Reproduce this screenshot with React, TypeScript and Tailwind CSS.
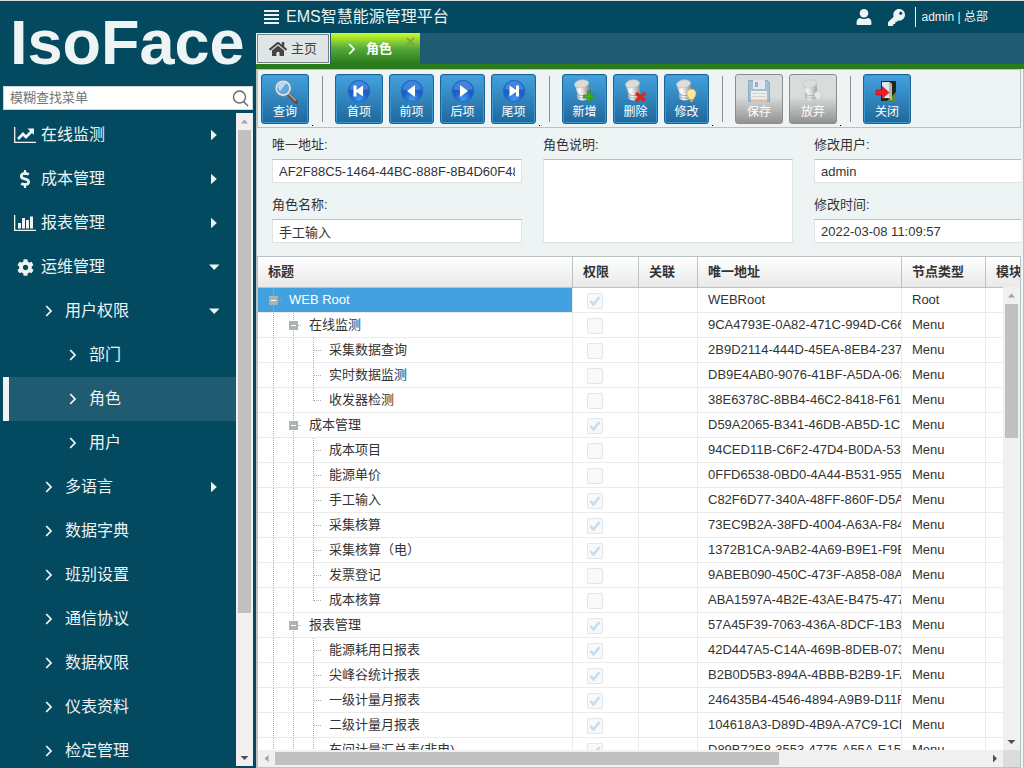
import type { ReactNode } from 'react';
import clsx from 'clsx';
import { FaCog, FaDollarSign, FaHome, FaKey } from 'react-icons/fa';

/* ---------- icons ---------- */

function LineChartIcon() {
  return (
    <svg width="22" height="16" viewBox="0 0 22 16" fill="none" stroke="currentColor">
      <path d="M.7 0v15.300H22" strokeWidth="1.300" />
      <path d="M4 12l5-5 3 3 6-6" strokeWidth="2.800" />
      <path d="M13.500 1.500H20V8z" fill="currentColor" stroke="none" />
    </svg>
  );
}

function BarChartIcon() {
  return (
    <svg width="22" height="16" viewBox="0 0 22 16" fill="currentColor">
      <path d="M0 0h1.300v14.700H22V16H0z" />
      <path d="M4 8h3v5.500H4zM8 3h3v10.500H8zM12 5h3v8.500h-3zM16 1.500h3v12h-3z" />
    </svg>
  );
}

function ChevronIcon() {
  return (
    <svg width="8" height="12" viewBox="0 0 8 12" fill="none" stroke="currentColor" strokeWidth="1.800">
      <path d="M1.200 1L6 6l-4.800 5" />
    </svg>
  );
}

function CaretIcon({ open }: { open: boolean }) {
  return (
    <svg width="12" height="12" viewBox="0 0 12 12" fill="currentColor">
      {open ? <path d="M1 3.500h10.500L6.200 9z" /> : <path d="M3 .8v10.400L8.800 6z" />}
    </svg>
  );
}

function MagnifierIcon() {
  return (
    <svg width="28" height="28" viewBox="0 0 30 30">
      <path d="M19 19l8 8" stroke="#5d5048" strokeWidth="4" strokeLinecap="round" />
      <path d="M19 18l7 7" stroke="#b7a99c" strokeWidth="1.500" strokeLinecap="round" />
      <circle cx="13" cy="12" r="7.500" fill="#5fa9de" stroke="#e1e7ec" strokeWidth="2" />
      <circle cx="13" cy="12" r="8.800" fill="none" stroke="#7d8790" strokeWidth="0.800" />
      <path d="M7.500 11a6 6 0 0 1 9-4.500l-7 9z" fill="#b9dcf4" />
    </svg>
  );
}

function RoundIcon({ d, id }: { d: string; id: string }) {
  return (
    <svg width="24" height="24" viewBox="0 0 24 24">
      <radialGradient id={id} cx="50%" cy="85%" r="85%">
        <stop offset="0" stopColor="#3f9bf5" />
        <stop offset="0.5" stopColor="#1a5cc4" />
        <stop offset="1" stopColor="#2a6fd0" />
      </radialGradient>
      <circle cx="12" cy="12" r="10.800" fill={`url(#${id})`} stroke="#2467c4" strokeWidth="0.800" />
      <path d="M2.500 10a9.700 9.700 0 0 1 19 0Q12 13 2.500 10z" fill="#5b9ee8" opacity="0.55" />
      <path d={d} fill="#fff" />
    </svg>
  );
}

function DatabaseIcon({ id, children }: { id: string; children?: ReactNode }) {
  return (
    <svg width="24" height="24" viewBox="0 0 24 24">
      <linearGradient id={id}>
        <stop offset="0" stopColor="#b5b5b5" />
        <stop offset="0.35" stopColor="#ffffff" />
        <stop offset="0.7" stopColor="#c4c4c4" />
        <stop offset="1" stopColor="#8d8d8d" />
      </linearGradient>
      <path d="M4 11v7c0 4.500 12 4.500 12 0v-7z" fill={`url(#${id})`} />
      <path d="M4 14c0 3.500 12 3.500 12 0M4 16.500c0 3.500 12 3.500 12 0" fill="none" stroke="#8a8a8a" strokeWidth="0.700" />
      <path d="M1.500 6l2.500 7c3 3 9 2 12-1l-.5-8z" fill={`url(#${id})`} />
      <ellipse cx="8.500" cy="4.800" rx="7.200" ry="4" fill="#dcdcdc" stroke="#b4b4b4" strokeWidth="0.500" transform="rotate(-10 8.500 4.800)" />
      {children}
    </svg>
  );
}

function FloppyIcon() {
  return (
    <svg width="24" height="24" viewBox="0 0 24 24">
      <path d="M1.500 1.500h19l2 2v19h-21z" fill="#8db3cf" stroke="#7296b1" />
      <path d="M6 1h12v9H6z" fill="#e8edf0" />
      <path d="M8 3h3v5H8z" fill="#819bb0" />
      <path d="M4 12h16v10H4z" fill="#f5f5f3" />
      <path d="M5 14.500h14M5 17.500h14" stroke="#cfcfcf" />
      <path d="M4 20.500h16V23H4z" fill="#e6b893" />
    </svg>
  );
}

function ExitIcon() {
  return (
    <svg width="24" height="24" viewBox="0 0 24 24">
      <path d="M6 2h15v20H6z" fill="#1d2a16" />
      <path d="M12 22l9-9v9z" fill="#5f8a34" />
      <path d="M7 3h7l3 2v16l-3-2H7z" fill="#e4e6e3" />
      <path d="M14 3l3 2v16l-3-3z" fill="#b3b8b0" />
      <path d="M1 11h6.500V7.500l6.500 6-6.500 6V16H1z" fill="#ee1c25" stroke="#a80f16" strokeWidth="0.600" />
    </svg>
  );
}

/* ---------- scrollbar arrows ---------- */

const arrows = {
  up: 'M5 10.500h7l-3.500-4z',
  down: 'M4.500 7h8l-4 4z',
  left: 'M10.500 5v7l-4-3.500z',
  right: 'M7 4.500v8l4-4z',
};

function ArrowCap({ dir, muted }: { dir: keyof typeof arrows; muted?: boolean }) {
  return (
    <svg width="17" height="17" viewBox="0 0 17 17" className="shrink-0">
      <path d={arrows[dir]} fill={muted ? '#a3a3a3' : '#505050'} />
    </svg>
  );
}

/* ---------- sidebar ---------- */

type MenuItem = {
  label: string;
  level: 0 | 1 | 2;
  icon?: ReactNode;
  caret?: 'right' | 'down';
  active?: boolean;
};

const menu: MenuItem[] = [
  { label: '在线监测', level: 0, icon: <LineChartIcon />, caret: 'right' },
  { label: '成本管理', level: 0, icon: <FaDollarSign size={18} />, caret: 'right' },
  { label: '报表管理', level: 0, icon: <BarChartIcon />, caret: 'right' },
  { label: '运维管理', level: 0, icon: <FaCog size={17} />, caret: 'down' },
  { label: '用户权限', level: 1, caret: 'down' },
  { label: '部门', level: 2 },
  { label: '角色', level: 2, active: true },
  { label: '用户', level: 2 },
  { label: '多语言', level: 1, caret: 'right' },
  { label: '数据字典', level: 1 },
  { label: '班别设置', level: 1 },
  { label: '通信协议', level: 1 },
  { label: '数据权限', level: 1 },
  { label: '仪表资料', level: 1 },
  { label: '检定管理', level: 1 },
];

const indent = ['pl-[5px]', 'pl-[29px]', 'pl-[53px]'];

function Sidebar() {
  return (
    <aside className="flex w-64 shrink-0 flex-col px-[3px] pb-0.5">
      <div className="flex h-[85px] shrink-0 items-center whitespace-nowrap pb-0.5 pl-[7px] text-[63px] font-bold leading-none text-[#eef3f4]">
        IsoFace
      </div>
      <div className="flex h-6 shrink-0 items-center border border-[#cfd6d8] bg-white pr-[3px]">
        <input
          aria-label="模糊查找菜单"
          placeholder="模糊查找菜单"
          className="min-w-0 flex-1 px-1.5 text-[13px] outline-none placeholder:text-[#757575]"
        />
        <svg width="17" height="17" viewBox="0 0 17 17" fill="none" stroke="#666" strokeWidth="1.400">
          <circle cx="7.500" cy="7" r="6" />
          <path d="M11.500 11.500l4.500 4.500" />
        </svg>
      </div>
      <div className="mt-[3px] flex min-h-0 flex-1">
        <nav className="min-w-0 flex-1 overflow-hidden">
          {menu.map((item) => (
            <a
              key={item.label}
              href="#"
              className={clsx(
                'flex h-11 items-center border-l-[6px] pr-4 text-base text-[#eef3f4]',
                indent[item.level],
                item.active ? 'border-[#eef3f4] bg-[#1f5b71]' : 'border-transparent',
              )}
            >
              <span className="mr-[5px] flex w-[22px] justify-center">{item.icon ?? <ChevronIcon />}</span>
              <span className="flex-1">{item.label}</span>
              {item.caret && <CaretIcon open={item.caret === 'down'} />}
            </a>
          ))}
        </nav>
        <div className="flex w-[17px] flex-col items-center bg-[#f0f0f0]">
          <ArrowCap dir="up" muted />
          <div className="h-[74%] w-[13px] bg-[#c0c0c0]" />
          <div className="flex-1" />
          <ArrowCap dir="down" />
        </div>
      </div>
    </aside>
  );
}

/* ---------- top bar and tabs ---------- */

function TopBar() {
  return (
    <header className="flex h-8 shrink-0 items-center pl-2 pr-9 text-[#eef3f4]">
      <button aria-label="菜单" className="mr-1.5">
        <svg width="16" height="14" viewBox="0 0 16 14" fill="currentColor">
          <path d="M0 0h15v2H0zM0 4h15v2H0zM0 8h15v2H0zM0 12h15v2H0z" />
        </svg>
      </button>
      <h1 className="flex-1 text-base">EMS智慧能源管理平台</h1>
      <button aria-label="用户" className="mr-4">
        <svg width="16" height="16" viewBox="0 0 16 16" fill="currentColor">
          <circle cx="8" cy="4.300" r="4.300" />
          <path d="M1.500 16Q.5 16 .5 14.500.5 9.300 4 9q4 2 8 0 3.500.3 3.500 5.500 0 1.500-1 1.500z" />
        </svg>
      </button>
      <button aria-label="密码" className="mr-2.5">
        <FaKey size={17} />
      </button>
      <span className="border-l border-[#eef3f4] pl-1.5 text-xs leading-5">admin | 总部</span>
    </header>
  );
}

function Tabs() {
  return (
    <div className="flex h-9 shrink-0 gap-px border-b-[5px] border-[#2b7a1b] bg-[#1f5b71]">
      <button className="flex w-[74px] border border-[#eef3f4] bg-[#e0e5e5] text-[13px] text-[#444]">
        <span className="flex h-full w-full items-center justify-center gap-1 border border-[#777f82]">
          <FaHome size={18} />
          主页
        </span>
      </button>
      <div className="flex w-[89px] bg-linear-to-b from-[#cbff18] via-[#55a83a] to-[#2b7a1b] text-white">
        <button className="flex flex-1 items-center gap-2.5 pl-[17px] text-[13px] font-bold">
          <ChevronIcon />
          角色
        </button>
        <button aria-label="关闭标签" className="mr-[5px] mt-1 self-start">
          <svg width="9" height="9" viewBox="0 0 9 9" stroke="#819455" strokeWidth="1.300">
            <path d="M1 1l7 7M8 1L1 8" />
          </svg>
        </button>
      </div>
    </div>
  );
}

/* ---------- toolbar ---------- */

function ToolButton({ label, icon, wide, disabled }: { label: string; icon: ReactNode; wide?: boolean; disabled?: boolean }) {
  return (
    <button
      disabled={disabled}
      className={clsx(
        'flex h-[50px] shrink-0 flex-col items-center rounded-[3px] border text-xs text-white',
        wide ? 'w-12' : 'w-[45px]',
        disabled
          ? 'border-[#8c8c8c] bg-linear-to-b from-[#d9dcdc] from-45% to-[#929292]'
          : 'border-[#1c6496] bg-linear-to-b from-[#44a2df] to-[#1f689b] inset-ring inset-ring-[#3796d4]',
      )}
    >
      <span className={clsx('flex h-7 items-center pt-1', disabled && 'opacity-70')}>{icon}</span>
      <span className="leading-[18px]">{label}</span>
    </button>
  );
}

function Separator() {
  return (
    <div className="relative ml-[7px] mr-1.5 h-[46px] w-px shrink-0 bg-[#8b8f91]">
      <svg width="2" height="1" viewBox="0 0 2 1" className="absolute -bottom-1 -left-2.5">
        <path d="M0 0h1v1H0z" fill="#000" />
        <path d="M1 0h1v1H1z" fill="#ff0" />
      </svg>
    </div>
  );
}

function Toolbar() {
  return (
    <div className="flex h-[59px] shrink-0 items-center gap-1.5 border border-[#b9c3c3] pl-[3px]">
      <ToolButton wide label="查询" icon={<MagnifierIcon />} />
      <Separator />
      <ToolButton wide label="首项" icon={<RoundIcon id="first" d="M6.500 6.500h3v4.500l6.500-4.500v11L9.500 13v4.500h-3z" />} />
      <ToolButton label="前项" icon={<RoundIcon id="prev" d="M15 6v12l-8-6z" />} />
      <ToolButton label="后项" icon={<RoundIcon id="next" d="M9 6v12l8-6z" />} />
      <ToolButton label="尾项" icon={<RoundIcon id="last" d="M7.500 6.500L14 11V6.500h3v11h-3V13l-6.500 4.500z" />} />
      <Separator />
      <ToolButton
        label="新增"
        icon={
          <DatabaseIcon id="db-add">
            <path d="M14.500 12h3v4h4v3h-4v4h-3v-4h-4v-3h4z" fill="#3fae1f" stroke="#2a8410" strokeWidth="0.600" />
          </DatabaseIcon>
        }
      />
      <ToolButton
        label="删除"
        icon={
          <DatabaseIcon id="db-del">
            <path d="M12 14l9 8M21 14l-9 8" stroke="#e4231b" strokeWidth="3.500" />
          </DatabaseIcon>
        }
      />
      <ToolButton
        label="修改"
        icon={
          <DatabaseIcon id="db-edit">
            <path d="M16.500 10a4.500 4.500 0 0 1 4.500 4.500c0 2.500-2 4-2.500 6h-4c-.5-2-2.500-3.500-2.500-6a4.500 4.500 0 0 1 4.500-4.500z" fill="#fde79e" stroke="#e3a93a" strokeWidth="0.600" />
            <path d="M15 21h3v2h-3z" fill="#b6a27a" />
          </DatabaseIcon>
        }
      />
      <Separator />
      <ToolButton wide disabled label="保存" icon={<FloppyIcon />} />
      <ToolButton
        wide
        disabled
        label="放弃"
        icon={
          <DatabaseIcon id="db-undo">
            <path d="M17 12a4 4 0 0 1 3 6l-3 4-3-4a4 4 0 0 1 3-6z" fill="#ededed" stroke="#bbb" strokeWidth="0.600" />
          </DatabaseIcon>
        }
      />
      <Separator />
      <ToolButton wide label="关闭" icon={<ExitIcon />} />
    </div>
  );
}

/* ---------- form ---------- */

const box = 'w-full border border-[#dfe3e3] border-t-[#b9bebe] bg-white px-1.5 text-[13px] text-[#333] outline-none';

function Field({ id, label, value }: { id: string; label: string; value: string }) {
  return (
    <div className="flex flex-col gap-[5px]">
      <label htmlFor={id} className="text-[13px] leading-[18px]">
        {label}
      </label>
      <input id={id} readOnly defaultValue={value} className={clsx(box, 'h-6')} />
    </div>
  );
}

function RoleForm() {
  return (
    <form className="flex h-32 shrink-0 gap-[21px] overflow-hidden py-2 pl-[15px] text-[#333]">
      <div className="flex w-[250px] shrink-0 flex-col gap-[13px]">
        <Field id="role-id" label="唯一地址:" value="AF2F88C5-1464-44BC-888F-8B4D60F48A21" />
        <Field id="role-name" label="角色名称:" value="手工输入" />
      </div>
      <div className="flex w-[250px] shrink-0 flex-col gap-[5px]">
        <label htmlFor="role-note" className="text-[13px] leading-[18px]">
          角色说明:
        </label>
        <textarea id="role-note" className={clsx(box, 'h-[84px] resize-none')} />
      </div>
      <div className="flex w-[250px] shrink-0 flex-col gap-[13px]">
        <Field id="mod-user" label="修改用户:" value="admin" />
        <Field id="mod-time" label="修改时间:" value="2022-03-08 11:09:57" />
      </div>
    </form>
  );
}

/* ---------- tree grid ---------- */

type Row = { title: string; level: 0 | 1 | 2; checked: boolean; id: string; type: string; last?: boolean };

const rows: Row[] = [
  { title: 'WEB Root', level: 0, checked: true, id: 'WEBRoot', type: 'Root' },
  { title: '在线监测', level: 1, checked: false, id: '9CA4793E-0A82-471C-994D-C66B', type: 'Menu' },
  { title: '采集数据查询', level: 2, checked: false, id: '2B9D2114-444D-45EA-8EB4-237', type: 'Menu' },
  { title: '实时数据监测', level: 2, checked: false, id: 'DB9E4AB0-9076-41BF-A5DA-063', type: 'Menu' },
  { title: '收发器检测', level: 2, checked: false, id: '38E6378C-8BB4-46C2-8418-F61', type: 'Menu', last: true },
  { title: '成本管理', level: 1, checked: true, id: 'D59A2065-B341-46DB-AB5D-1C', type: 'Menu' },
  { title: '成本项目', level: 2, checked: false, id: '94CED11B-C6F2-47D4-B0DA-53', type: 'Menu' },
  { title: '能源单价', level: 2, checked: false, id: '0FFD6538-0BD0-4A44-B531-955', type: 'Menu' },
  { title: '手工输入', level: 2, checked: true, id: 'C82F6D77-340A-48FF-860F-D5A', type: 'Menu' },
  { title: '采集核算', level: 2, checked: true, id: '73EC9B2A-38FD-4004-A63A-F84', type: 'Menu' },
  { title: '采集核算（电）', level: 2, checked: true, id: '1372B1CA-9AB2-4A69-B9E1-F9E', type: 'Menu' },
  { title: '发票登记', level: 2, checked: false, id: '9ABEB090-450C-473F-A858-08A', type: 'Menu' },
  { title: '成本核算', level: 2, checked: false, id: 'ABA1597A-4B2E-43AE-B475-477', type: 'Menu', last: true },
  { title: '报表管理', level: 1, checked: true, id: '57A45F39-7063-436A-8DCF-1B3', type: 'Menu' },
  { title: '能源耗用日报表', level: 2, checked: true, id: '42D447A5-C14A-469B-8DEB-073', type: 'Menu' },
  { title: '尖峰谷统计报表', level: 2, checked: true, id: 'B2B0D5B3-894A-4BBB-B2B9-1FA', type: 'Menu' },
  { title: '一级计量月报表', level: 2, checked: true, id: '246435B4-4546-4894-A9B9-D11F', type: 'Menu' },
  { title: '二级计量月报表', level: 2, checked: true, id: '104618A3-D89D-4B9A-A7C9-1CE', type: 'Menu' },
  { title: '车间计量汇总表(非电)', level: 2, checked: true, id: 'D89B72E8-3553-4775-A55A-E15', type: 'Menu' },
];

function Guide({ node, leaf, last }: { node?: boolean; leaf?: boolean; last?: boolean }) {
  return (
    <svg width="20" height="24" viewBox="0 0 20 24" className="shrink-0" fill="none" stroke="#a9b0b0">
      <path d={last ? 'M9.500 0v13' : 'M9.500 0v24'} strokeDasharray="1 1" />
      {(node || leaf) && <path d="M10 12.500h8" strokeDasharray="1 1" />}
      {node && (
        <>
          <path d="M5 8h9v9H5z" fill="#aab4b3" stroke="none" />
          <path d="M7 12.500h5" stroke="#fff" />
        </>
      )}
    </svg>
  );
}

function Check({ checked, label }: { checked: boolean; label: string }) {
  return (
    <span className="relative block size-4">
      <input
        type="checkbox"
        aria-label={label}
        checked={checked}
        disabled
        readOnly
        className="block size-4 appearance-none rounded-[2px] border border-[#e3e6e6] bg-[#f8f9f9]"
      />
      {checked && (
        <svg width="16" height="16" viewBox="0 0 16 16" className="absolute left-0 top-0" fill="none" stroke="#c6ddec" strokeWidth="2.500">
          <path d="M3.500 8l3 3.500 6-7.500" />
        </svg>
      )}
    </span>
  );
}

const th = 'h-[31px] overflow-hidden border-b border-r border-[#b9c3c3] px-2.5 text-left font-bold whitespace-nowrap';
const td = 'h-[25px] overflow-hidden border-b border-r border-[#ebebeb] whitespace-nowrap';

function TreeGrid() {
  return (
    <div className="flex min-h-0 flex-1 flex-col border border-[#b9c3c3] bg-white">
      <div className="relative min-h-0 flex-1 overflow-hidden">
        <table className="w-[1100px] table-fixed border-separate border-spacing-0 text-[13px] text-[#333]">
          <colgroup>
            <col className="w-[315px]" />
            <col className="w-[66px]" />
            <col className="w-[59px]" />
            <col className="w-[204px]" />
            <col className="w-[84px]" />
            <col />
          </colgroup>
          <thead className="bg-linear-to-b from-white to-[#e8e8e8]">
            <tr>
              <th className={th}>标题</th>
              <th className={th}>权限</th>
              <th className={th}>关联</th>
              <th className={th}>唯一地址</th>
              <th className={th}>节点类型</th>
              <th className={th}>模块</th>
            </tr>
          </thead>
          <tbody>
            {rows.map((row) => (
              <tr key={row.id}>
                <td className={td}>
                  <div className={clsx('flex h-6 items-center pl-1.5', row.level === 0 && 'bg-[#43a1df] text-white')}>
                    <Guide node={row.level === 0} />
                    {row.level > 0 && <Guide node={row.level === 1} />}
                    {row.level > 1 && <Guide leaf last={row.last} />}
                    <span className="ml-[5px]">{row.title}</span>
                  </div>
                </td>
                <td className={clsx(td, 'pl-3.5 pt-0.5')}>
                  <Check checked={row.checked} label={row.title} />
                </td>
                <td className={td} />
                <td className={td}>
                  <div className="overflow-hidden pl-2.5">{row.id}</div>
                </td>
                <td className={clsx(td, 'pl-2.5')}>{row.type}</td>
                <td className={td} />
              </tr>
            ))}
          </tbody>
        </table>
        <div className="absolute bottom-0 right-0 top-[30px] flex w-[17px] flex-col items-center bg-[#f0f0f0]">
          <ArrowCap dir="up" muted />
          <div className="h-[29%] w-[13px] bg-[#c0c0c0]" />
          <div className="flex-1" />
          <ArrowCap dir="down" />
        </div>
      </div>
      <div className="flex h-[17px] shrink-0">
        <div className="flex flex-1 items-center bg-[#f0f0f0]">
          <ArrowCap dir="left" muted />
          <div className="h-[13px] w-[504px] bg-[#c0c0c0]" />
          <div className="flex-1" />
          <ArrowCap dir="right" />
        </div>
        <div className="w-[17px] bg-[#dcdcdc]" />
      </div>
    </div>
  );
}

export default function App() {
  return (
    <div className="flex h-screen overflow-hidden border-t border-[#d5dddf] bg-[#034a61] font-['Liberation_Sans','Noto_Sans_CJK_SC',sans-serif]">
      <Sidebar />
      <div className="flex min-w-0 flex-1 flex-col">
        <TopBar />
        <Tabs />
        <main className="flex min-h-0 flex-1 flex-col border-x border-[#b9c3c3] bg-[#eef3f4] pr-0.5">
          <Toolbar />
          <RoleForm />
          <TreeGrid />
        </main>
      </div>
    </div>
  );
}
